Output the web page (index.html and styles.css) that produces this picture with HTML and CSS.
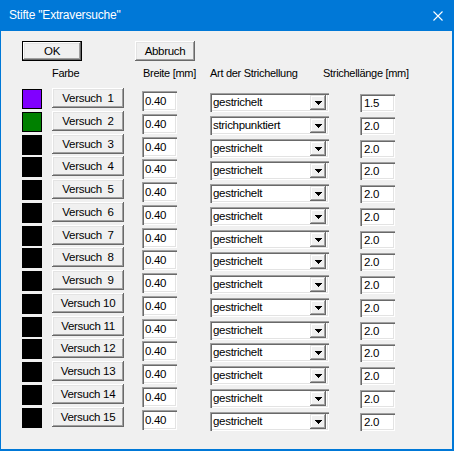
FILE: index.html
```html
<!DOCTYPE html>
<html lang="de">
<head>
<meta charset="utf-8">
<title>Stifte</title>
<link rel="stylesheet" href="styles.css">
</head>
<body>
<div class="window">
  <div class="titlebar">
    <span class="title">Stifte "Extraversuche"</span>
    <svg class="close" width="10" height="10" viewBox="0 0 10 10">
      <path d="M0.5 0.5 L9.5 9.5 M9.5 0.5 L0.5 9.5" stroke="#fff" stroke-width="1.1" fill="none"/>
    </svg>
  </div>
  <div class="client">
    <div class="actions">
      <button class="btn btn-default">OK</button>
      <button class="btn">Abbruch</button>
    </div>
    <div class="headings">
      <span class="h-color">Farbe</span>
      <span class="h-width">Breite [mm]</span>
      <span class="h-style">Art der Strichellung</span>
      <span class="h-length">Strichellänge [mm]</span>
    </div>
    <div class="pens">
      <div class="pen"><span class="swatch purple"></span><button class="btn pen-btn">Versuch  1</button><span class="field width">0.40</span><span class="combo">gestrichelt<i class="drop"><svg width="7" height="4"><rect x="0" y="0" width="7" height="1"/><rect x="1" y="1" width="5" height="1"/><rect x="2" y="2" width="3" height="1"/><rect x="3" y="3" width="1" height="1"/></svg></i></span><span class="field length">1.5</span></div>
      <div class="pen"><span class="swatch green"></span><button class="btn pen-btn">Versuch  2</button><span class="field width">0.40</span><span class="combo">strichpunktiert<i class="drop"><svg width="7" height="4"><rect x="0" y="0" width="7" height="1"/><rect x="1" y="1" width="5" height="1"/><rect x="2" y="2" width="3" height="1"/><rect x="3" y="3" width="1" height="1"/></svg></i></span><span class="field length">2.0</span></div>
      <div class="pen"><span class="swatch"></span><button class="btn pen-btn">Versuch  3</button><span class="field width">0.40</span><span class="combo">gestrichelt<i class="drop"><svg width="7" height="4"><rect x="0" y="0" width="7" height="1"/><rect x="1" y="1" width="5" height="1"/><rect x="2" y="2" width="3" height="1"/><rect x="3" y="3" width="1" height="1"/></svg></i></span><span class="field length">2.0</span></div>
      <div class="pen"><span class="swatch"></span><button class="btn pen-btn">Versuch  4</button><span class="field width">0.40</span><span class="combo">gestrichelt<i class="drop"><svg width="7" height="4"><rect x="0" y="0" width="7" height="1"/><rect x="1" y="1" width="5" height="1"/><rect x="2" y="2" width="3" height="1"/><rect x="3" y="3" width="1" height="1"/></svg></i></span><span class="field length">2.0</span></div>
      <div class="pen"><span class="swatch"></span><button class="btn pen-btn">Versuch  5</button><span class="field width">0.40</span><span class="combo">gestrichelt<i class="drop"><svg width="7" height="4"><rect x="0" y="0" width="7" height="1"/><rect x="1" y="1" width="5" height="1"/><rect x="2" y="2" width="3" height="1"/><rect x="3" y="3" width="1" height="1"/></svg></i></span><span class="field length">2.0</span></div>
      <div class="pen"><span class="swatch"></span><button class="btn pen-btn">Versuch  6</button><span class="field width">0.40</span><span class="combo">gestrichelt<i class="drop"><svg width="7" height="4"><rect x="0" y="0" width="7" height="1"/><rect x="1" y="1" width="5" height="1"/><rect x="2" y="2" width="3" height="1"/><rect x="3" y="3" width="1" height="1"/></svg></i></span><span class="field length">2.0</span></div>
      <div class="pen"><span class="swatch"></span><button class="btn pen-btn">Versuch  7</button><span class="field width">0.40</span><span class="combo">gestrichelt<i class="drop"><svg width="7" height="4"><rect x="0" y="0" width="7" height="1"/><rect x="1" y="1" width="5" height="1"/><rect x="2" y="2" width="3" height="1"/><rect x="3" y="3" width="1" height="1"/></svg></i></span><span class="field length">2.0</span></div>
      <div class="pen"><span class="swatch"></span><button class="btn pen-btn">Versuch  8</button><span class="field width">0.40</span><span class="combo">gestrichelt<i class="drop"><svg width="7" height="4"><rect x="0" y="0" width="7" height="1"/><rect x="1" y="1" width="5" height="1"/><rect x="2" y="2" width="3" height="1"/><rect x="3" y="3" width="1" height="1"/></svg></i></span><span class="field length">2.0</span></div>
      <div class="pen"><span class="swatch"></span><button class="btn pen-btn">Versuch  9</button><span class="field width">0.40</span><span class="combo">gestrichelt<i class="drop"><svg width="7" height="4"><rect x="0" y="0" width="7" height="1"/><rect x="1" y="1" width="5" height="1"/><rect x="2" y="2" width="3" height="1"/><rect x="3" y="3" width="1" height="1"/></svg></i></span><span class="field length">2.0</span></div>
      <div class="pen"><span class="swatch"></span><button class="btn pen-btn">Versuch 10</button><span class="field width">0.40</span><span class="combo">gestrichelt<i class="drop"><svg width="7" height="4"><rect x="0" y="0" width="7" height="1"/><rect x="1" y="1" width="5" height="1"/><rect x="2" y="2" width="3" height="1"/><rect x="3" y="3" width="1" height="1"/></svg></i></span><span class="field length">2.0</span></div>
      <div class="pen"><span class="swatch"></span><button class="btn pen-btn">Versuch 11</button><span class="field width">0.40</span><span class="combo">gestrichelt<i class="drop"><svg width="7" height="4"><rect x="0" y="0" width="7" height="1"/><rect x="1" y="1" width="5" height="1"/><rect x="2" y="2" width="3" height="1"/><rect x="3" y="3" width="1" height="1"/></svg></i></span><span class="field length">2.0</span></div>
      <div class="pen"><span class="swatch"></span><button class="btn pen-btn">Versuch 12</button><span class="field width">0.40</span><span class="combo">gestrichelt<i class="drop"><svg width="7" height="4"><rect x="0" y="0" width="7" height="1"/><rect x="1" y="1" width="5" height="1"/><rect x="2" y="2" width="3" height="1"/><rect x="3" y="3" width="1" height="1"/></svg></i></span><span class="field length">2.0</span></div>
      <div class="pen"><span class="swatch"></span><button class="btn pen-btn">Versuch 13</button><span class="field width">0.40</span><span class="combo">gestrichelt<i class="drop"><svg width="7" height="4"><rect x="0" y="0" width="7" height="1"/><rect x="1" y="1" width="5" height="1"/><rect x="2" y="2" width="3" height="1"/><rect x="3" y="3" width="1" height="1"/></svg></i></span><span class="field length">2.0</span></div>
      <div class="pen"><span class="swatch"></span><button class="btn pen-btn">Versuch 14</button><span class="field width">0.40</span><span class="combo">gestrichelt<i class="drop"><svg width="7" height="4"><rect x="0" y="0" width="7" height="1"/><rect x="1" y="1" width="5" height="1"/><rect x="2" y="2" width="3" height="1"/><rect x="3" y="3" width="1" height="1"/></svg></i></span><span class="field length">2.0</span></div>
      <div class="pen"><span class="swatch"></span><button class="btn pen-btn">Versuch 15</button><span class="field width">0.40</span><span class="combo">gestrichelt<i class="drop"><svg width="7" height="4"><rect x="0" y="0" width="7" height="1"/><rect x="1" y="1" width="5" height="1"/><rect x="2" y="2" width="3" height="1"/><rect x="3" y="3" width="1" height="1"/></svg></i></span><span class="field length">2.0</span></div>
    </div>
  </div>
</div>
</body>
</html>
```
FILE: styles.css
```css
* {
  box-sizing: border-box;
}

html, body {
  margin: 0;
  padding: 0;
  background: #f0f0f0;
}

body {
  font-family: "Liberation Sans", Arial, sans-serif;
  font-size: 11px;
  letter-spacing: -0.3px;
  color: #000;
}

/* dialog frame */
.window {
  width: 454px;
  height: 451px;
  background: #0078d7;
  padding: 0 2px 2px 1px;
  display: flex;
  flex-direction: column;
}

.titlebar {
  height: 31px;
  flex: none;
  display: flex;
  align-items: center;
  justify-content: space-between;
  padding: 0 9px 1px 8px;
}

.title {
  font-size: 12px;
  letter-spacing: -0.2px;
  color: #fff;
}

.close {
  display: block;
  margin-top: 1px;
}

.client {
  flex: 1;
  background: #f0f0f0;
  padding: 10px 0 0 21px;
}

/* push buttons */
.btn {
  font: inherit;
  letter-spacing: inherit;
  color: #000;
  margin: 0;
  padding: 0;
  border: none;
  background: #f0f0f0;
  height: 20px;
  line-height: 20px;
  text-align: center;
  white-space: pre;
  box-shadow:
    inset -1px -1px #696969,
    inset 1px 1px #fff,
    inset -2px -2px #a0a0a0,
    inset 2px 2px #e3e3e3;
}

.actions {
  display: flex;
  gap: 53px;
}

.actions .btn {
  width: 60px;
  font-size: 11.5px;
}

.btn-default {
  box-shadow:
    inset 0 0 0 1px #000,
    inset -2px -2px #696969,
    inset 2px 2px #fff,
    inset -3px -3px #a0a0a0,
    inset 3px 3px #e3e3e3;
}

/* column captions */
.headings {
  display: flex;
  margin-top: 6px;
  padding-left: 30px;
  height: 13px;
  line-height: 13px;
  white-space: nowrap;
}

.h-color { width: 90px; }
.h-width { width: 68px; padding-left: 1px; }
.h-style { width: 113px; }

/* pen table */
.pens {
  display: grid;
  grid-template-columns: 30px 90px 68px 150px 35px;
  grid-auto-rows: 22.75px;
  align-items: start;
  margin-top: 8px;
  font-size: 11.5px;
}

.pen {
  display: contents;
}

.swatch {
  width: 20px;
  height: 20px;
  margin-top: 1px;
  border: 1px solid #000;
  background: #000;
}

.swatch.purple { background: #8000ff; }
.swatch.green { background: #008000; }

.pen-btn {
  width: 72px;
}

/* sunken edit fields */
.field,
.combo {
  display: block;
  background: #fff;
  padding-left: 3px;
  white-space: nowrap;
  box-shadow:
    inset 1px 1px #a0a0a0,
    inset 2px 2px #696969,
    inset -1px -1px #fff,
    inset -2px -2px #e3e3e3;
}

.field.width {
  width: 35px;
  height: 20px;
  line-height: 20px;
  margin-top: 3px;
}

.field.length {
  width: 35px;
  height: 18px;
  line-height: 18px;
  margin-top: 6px;
  padding-left: 4px;
}

.combo {
  position: relative;
  width: 119px;
  height: 19px;
  line-height: 19px;
  margin-top: 5px;
}

/* drop-down arrow button of the combo box */
.drop {
  position: absolute;
  right: 3px;
  top: 2px;
  bottom: 2px;
  width: 16px;
  background: #f0f0f0;
  display: flex;
  align-items: center;
  justify-content: center;
  box-shadow:
    inset -1px -1px #696969,
    inset 1px 1px #e3e3e3,
    inset -2px -2px #a0a0a0,
    inset 2px 2px #fff;
}

.drop svg {
  display: block;
  fill: #000;
  margin-top: 1px;
}
```
